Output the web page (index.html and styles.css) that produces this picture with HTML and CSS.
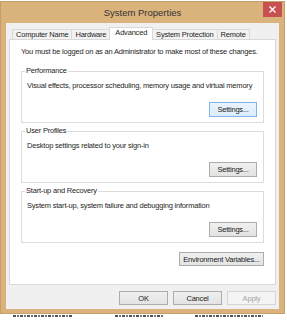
FILE: index.html
```html
<!DOCTYPE html>
<html lang="en">
<head>
    <meta charset="UTF-8">
    <meta name="viewport" content="width=device-width, initial-scale=1.0">
    <title>System Properties</title>
    <link rel="stylesheet" href="styles.css">
</head>
<body>
    <div class="window">
        <div class="titlebar">
            <span class="title">System Properties</span>
            <button class="close" aria-label="Close">
                <svg width="7" height="7" viewBox="0 0 7 7">
                    <path d="M0.5 0.5 L6.5 6.5 M6.5 0.5 L0.5 6.5" stroke="#fff" stroke-width="1.3"/>
                </svg>
            </button>
        </div>

        <div class="dialog">
            <div class="tabs">
                <div class="tab">Computer Name</div>
                <div class="tab">Hardware</div>
                <div class="tab selected">Advanced</div>
                <div class="tab">System Protection</div>
                <div class="tab">Remote</div>
            </div>

            <div class="panel">
                <p class="note">You must be logged on as an Administrator to make most of these changes.</p>

                <fieldset class="group">
                    <legend>Performance</legend>
                    <p>Visual effects, processor scheduling, memory usage and virtual memory</p>
                    <div class="group-actions">
                        <button class="btn btn-hover">Settings...</button>
                    </div>
                </fieldset>

                <fieldset class="group">
                    <legend>User Profiles</legend>
                    <p>Desktop settings related to your sign-in</p>
                    <div class="group-actions">
                        <button class="btn">Settings...</button>
                    </div>
                </fieldset>

                <fieldset class="group">
                    <legend>Start-up and Recovery</legend>
                    <p>System start-up, system failure and debugging information</p>
                    <div class="group-actions">
                        <button class="btn">Settings...</button>
                    </div>
                </fieldset>

                <div class="panel-actions">
                    <button class="btn btn-wide">Environment Variables...</button>
                </div>
            </div>

            <div class="dialog-actions">
                <button class="btn btn-dialog">OK</button>
                <button class="btn btn-dialog">Cancel</button>
                <button class="btn btn-dialog" disabled>Apply</button>
            </div>
        </div>
    </div>

    <!-- tops of the window underneath, only a sliver shows -->
    <div class="behind">
        <span class="behind-a"></span>
        <span class="behind-b"></span>
        <span class="behind-c"></span>
    </div>
</body>
</html>
```

FILE: styles.css
```css
:root {
    --frame: #d9b27c;
    --frame-edge: #c59e68;
    --face: #f0f0f0;
    --line: #d9d9d9;
    --group-line: #dcdcdc;
    --text: #262626;
}

body {
    margin: 0;
    background: #fff;
    font-family: 'Liberation Sans', Arial, sans-serif;
    font-size: 7.5px;
    letter-spacing: -0.2px;
    color: var(--text);
}

.window {
    width: 285px;
    box-sizing: border-box;
    margin-top: 1px;
    background: var(--frame);
    border: 1px solid var(--frame-edge);
    padding: 0 5px 4px 5px;
}

.titlebar {
    height: 21px;
    margin: 0 -5px;
    display: grid;
    grid-template-columns: 1fr auto 1fr;
    align-items: center;
}

.title {
    grid-column: 2;
    font-size: 9.5px;
    letter-spacing: 0;
    color: #333;
}

.close {
    grid-column: 3;
    justify-self: end;
    align-self: start;
    width: 19px;
    height: 15px;
    margin-right: 2px;
    padding: 0;
    border: none;
    background: #c75050;
    display: flex;
    align-items: center;
    justify-content: center;
}

.dialog {
    background: var(--face);
    padding: 4px 3px 4px 3px;
}

.tabs {
    display: flex;
    align-items: flex-end;
    padding-left: 3px;
    height: 12px;
}

.tab {
    height: 9px;
    line-height: 9px;
    padding: 0 3px;
    border: 1px solid var(--line);
    border-bottom: none;
    background: #f2f2f2;
    white-space: nowrap;
}

.tab + .tab {
    margin-left: -1px;
}

.tab.selected {
    position: relative;
    z-index: 1;
    padding: 0 5px 3px;
    margin-bottom: -1px;
    background: #fff;
}

.panel {
    background: #fff;
    border: 1px solid var(--line);
    padding: 7px 11px 18px 11px;
}

.note {
    margin: 0;
    line-height: 10px;
    white-space: nowrap;
}

.group {
    margin: 9px 0 0;
    padding: 0 6px 5px 5px;
    min-width: 0;
    border: 1px solid var(--group-line);
}

.group + .group {
    margin-top: 3px;
}

.group legend {
    padding: 0 1px;
    margin-left: -2px;
    line-height: 10px;
}

.group p {
    margin: 5px 0 0;
    line-height: 10px;
    white-space: nowrap;
}

.group-actions {
    display: flex;
    justify-content: flex-end;
    margin-top: 11px;
}

.panel-actions {
    display: flex;
    justify-content: flex-end;
    margin-top: 9px;
}

.btn {
    width: 48px;
    height: 15px;
    padding: 0;
    font-family: inherit;
    font-size: 7.5px;
    letter-spacing: -0.2px;
    color: #1a1a1a;
    background: linear-gradient(#f0f0f0, #e3e3e3);
    border: 1px solid #acacac;
    border-radius: 0;
}

.btn-hover {
    background: linear-gradient(#eaf4fc, #dbecfb);
    border-color: #7eb4ea;
}

.btn-wide {
    width: 85px;
    height: 14px;
}

.dialog-actions {
    display: flex;
    justify-content: flex-end;
    gap: 5px;
    margin-top: 6px;
}

.btn-dialog {
    width: 49px;
    height: 14px;
}

.btn-dialog:disabled {
    color: #a6a6a6;
    background: #f4f4f4;
    border-color: #d5d5d5;
}

.behind {
    height: 4px;
    display: flex;
    align-items: flex-start;
    padding-top: 1px;
    box-sizing: border-box;
}

.behind span {
    height: 2px;
    background: repeating-linear-gradient(90deg, #555 0 3px, transparent 3px 4px, #777 4px 6px, transparent 6px 7px);
}

.behind-a {
    width: 59px;
    margin-left: 13px;
}

.behind-b {
    width: 48px;
    margin-left: 43px;
}

.behind-c {
    width: 68px;
    margin-left: 32px;
}
```
